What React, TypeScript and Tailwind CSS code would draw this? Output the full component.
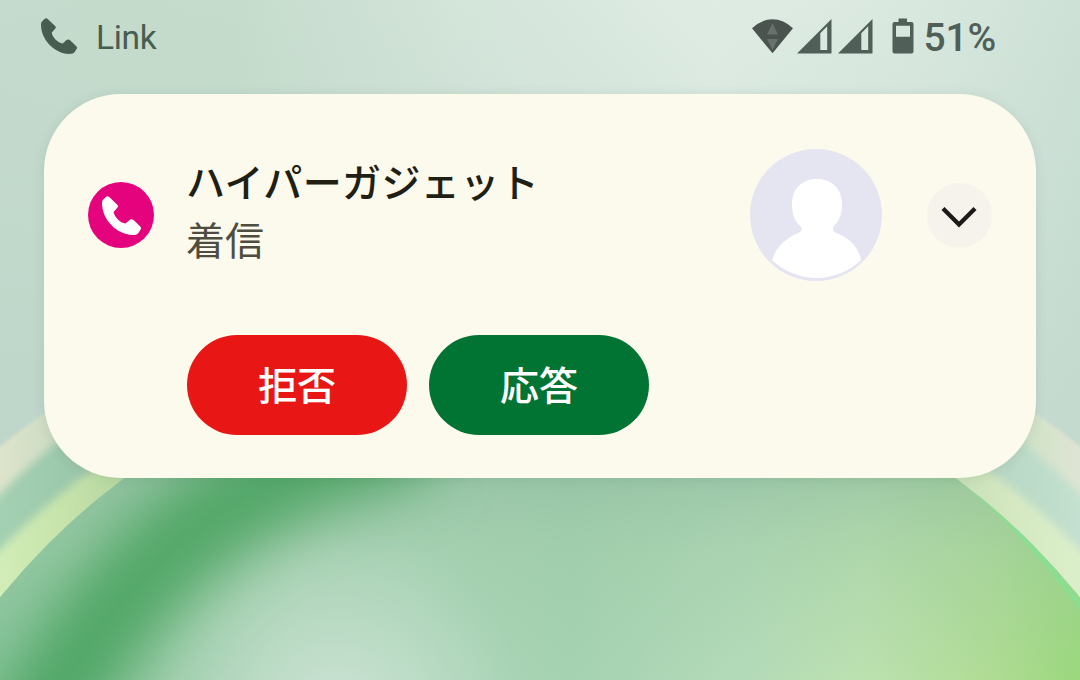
import type { ReactNode } from "react";

const HANDSET =
  "M3.5.9C4.5-.1 5.7-.1 6.7.9L14.1 8.1C15 9 15 9.8 14.3 10.6L10.7 14.7C11.6 19.6 16.8 24.6 21.7 25.4L25.2 22.3C26.3 21.3 28 21.2 29.1 22.2L35.3 28.2C36.2 29.1 36.2 30.1 35.5 31.2L33.6 34.1C32.4 35.8 31 36 28 36C13.5 35.5.2 22 0 7C0 5.2.3 4.1 1.2 3.2Z";

function Handset({ size, className }: { size: number; className?: string }) {
  return (
    <svg width={size} height={size} viewBox="0 0 36 36" fill="currentColor" className={className} aria-hidden="true">
      <path d={HANDSET} />
    </svg>
  );
}

function Wallpaper() {
  return (
    <svg className="absolute inset-0" width="1080" height="680" viewBox="0 0 1080 680" aria-hidden="true">
      <defs>
        <linearGradient id="sky">
          <stop offset="0" stopColor="#c4dbcd" />
          <stop offset=".22" stopColor="#c5dccc" />
          <stop offset=".42" stopColor="#d3e4d9" />
          <stop offset=".66" stopColor="#dfece4" />
          <stop offset=".85" stopColor="#d9e8df" />
          <stop offset="1" stopColor="#cde1d6" />
        </linearGradient>
        <linearGradient id="skyShade" x1="0" y1="0" x2="0" y2="1">
          <stop offset="0" stopColor="#b8d1c6" stopOpacity="0" />
          <stop offset=".6" stopColor="#b8d1c6" stopOpacity=".45" />
        </linearGradient>
        <linearGradient id="outerRim" x1="0" y1="0" x2="1080" y2="0" gradientUnits="userSpaceOnUse">
          <stop offset="0" stopColor="#dde4cb" />
          <stop offset=".05" stopColor="#cddcc4" />
          <stop offset=".95" stopColor="#cfe2c6" />
          <stop offset="1" stopColor="#dfe4d4" />
        </linearGradient>
        <linearGradient id="gap" x1="0" y1="0" x2="1080" y2="0" gradientUnits="userSpaceOnUse">
          <stop offset="0" stopColor="#a4d0b2" />
          <stop offset=".09" stopColor="#98c4a8" />
          <stop offset=".9" stopColor="#b4d4c0" />
          <stop offset="1" stopColor="#c4e1d0" />
        </linearGradient>
        <linearGradient id="innerRim" x1="0" y1="0" x2="1080" y2="0" gradientUnits="userSpaceOnUse">
          <stop offset="0" stopColor="#d2edb8" />
          <stop offset=".06" stopColor="#c6e3aa" />
          <stop offset=".12" stopColor="#b4d5a0" />
          <stop offset=".88" stopColor="#c6deb6" />
          <stop offset=".94" stopColor="#d5e8c2" />
          <stop offset="1" stopColor="#dbefca" />
        </linearGradient>
        <linearGradient id="disc">
          <stop offset="0" stopColor="#8bc69e" />
          <stop offset=".14" stopColor="#9ccdaa" />
          <stop offset=".28" stopColor="#acd4b8" />
          <stop offset=".38" stopColor="#add6ba" />
          <stop offset=".53" stopColor="#a5d2b1" />
          <stop offset=".68" stopColor="#b3dab9" />
          <stop offset=".8" stopColor="#bce1b0" />
          <stop offset=".92" stopColor="#afdc93" />
          <stop offset="1" stopColor="#9bd87c" />
        </linearGradient>
        <linearGradient id="discShade" x1="0" y1="470" x2="0" y2="680" gradientUnits="userSpaceOnUse">
          <stop offset="0" stopColor="#90bda0" stopOpacity=".7" />
          <stop offset=".4" stopColor="#9bc8a5" stopOpacity=".4" />
          <stop offset="1" stopColor="#9bc8a5" stopOpacity="0" />
        </linearGradient>
        <radialGradient id="pool" cx="335" cy="715" r="190" gradientUnits="userSpaceOnUse">
          <stop offset="0" stopColor="#d2e6d9" stopOpacity=".9" />
          <stop offset="1" stopColor="#c5dfce" stopOpacity="0" />
        </radialGradient>
        <clipPath id="discClip">
          <circle cx="540" cy="1035" r="695" />
        </clipPath>
        <filter id="soft" x="-30%" y="-30%" width="160%" height="160%">
          <feGaussianBlur stdDeviation="30" />
        </filter>
        <filter id="edge">
          <feGaussianBlur stdDeviation="1.8" />
        </filter>
        <filter id="glow">
          <feGaussianBlur stdDeviation="4" />
        </filter>
      </defs>

      <rect width="1080" height="680" fill="url(#sky)" />
      <rect width="1080" height="680" fill="url(#skyShade)" />
      <circle cx="540" cy="1121" r="864" fill="url(#outerRim)" filter="url(#edge)" />
      <circle cx="540" cy="1040" r="768" fill="url(#gap)" filter="url(#glow)" />
      <circle cx="540" cy="1080" r="757" fill="url(#innerRim)" filter="url(#glow)" />

      <g clipPath="url(#discClip)">
        <rect y="340" width="1080" height="340" fill="url(#disc)" />
        <rect y="340" width="1080" height="340" fill="url(#discShade)" />
        <rect x="120" y="480" width="440" height="200" fill="url(#pool)" />
        <path
          d="M10 780C70 660 130 570 220 510C275 473 335 448 425 430"
          fill="none"
          stroke="#4ba361"
          strokeOpacity=".95"
          strokeWidth="94"
          filter="url(#soft)"
        />
        <path d="M965 480Q1028 535 1090 618" fill="none" stroke="#86e092" strokeWidth="5" filter="url(#edge)" />
      </g>
    </svg>
  );
}

function SignalIcon() {
  return (
    <svg width="35" height="35" viewBox="0 0 35 35" fill="currentColor" aria-hidden="true">
      <path fillRule="evenodd" d="M0 34.5L34.5 0V34.5ZM23.3 14.2V31H30.2V7.2Z" />
    </svg>
  );
}

function StatusBar() {
  return (
    <header className="flex h-[76px] items-center justify-between pr-[84px] pl-[41px] font-['Roboto',sans-serif]">
      <div className="flex items-center gap-[19px] text-[#475d50]">
        <Handset size={36} className="-mt-1" />
        <span className="text-[33.5px] leading-10 tracking-[-0.3px]">Link</span>
      </div>
      <div className="flex items-center text-[#505f57]">
        <svg width="41" height="35" viewBox="0 0 41 35" className="-mt-1" aria-hidden="true">
          <path d="M0 9.3Q9.5 .3 20.5.3T41 9.3L20.5 34.3Z" fill="#4b534f" />
          <path d="M20.5 4L26 15.5H15ZM15 20H26L20.5 31Z" fill="#68716c" />
        </svg>
        <div className="-mt-1 ml-1 flex gap-1.5">
          <SignalIcon />
          <SignalIcon />
        </div>
        <svg width="22" height="36" viewBox="0 0 22 36" fill="currentColor" className="-mt-1 ml-[19px]" aria-hidden="true">
          <path
            fillRule="evenodd"
            d="M6.5.5H15V4H19.5Q21.5 4 21.5 6V33.5Q21.5 35.5 19.5 35.5H2.5Q.5 35.5.5 33.5V6Q.5 4 2.5 4H6.5ZM4 7.7V18.7H18V7.7Z"
          />
        </svg>
        <span className="ml-2.5 text-[39px] leading-10 font-medium tracking-[-0.2px]">51%</span>
      </div>
    </header>
  );
}

function Avatar() {
  return (
    <svg width="132" height="132" viewBox="0 0 132 132" className="shrink-0" aria-hidden="true">
      <circle cx="66" cy="66" r="66" fill="#e4e5f0" />
      <path
        fill="#fff"
        d="M67 30C82 30 92 40 92 55C92 66 89 72 84 77C82 80 83 82 86 84C98 88 109 98 111 111A64 64 0 0 1 22 111C26 98 36 89 48 84C52 82 53 80 50 77C45 72 42 66 42 55C42 40 52 30 67 30Z"
      />
    </svg>
  );
}

function ActionButton({ className, children }: { className: string; children: ReactNode }) {
  return (
    <button
      type="button"
      className={`flex h-[100px] w-[220px] items-center justify-center rounded-full pb-1 text-[39px] leading-none font-medium text-white ${className}`}
    >
      {children}
    </button>
  );
}

export default function App() {
  return (
    <div className="relative h-[680px] w-[1080px] overflow-hidden">
      <Wallpaper />
      <div className="relative">
        <StatusBar />
        <main className="mx-[44px] mt-[18px] h-[384px] rounded-[77px] bg-[#fbfaed] px-11 pt-[54px] font-['Noto_Sans_CJK_JP',sans-serif] shadow-[0_1px_12px_rgba(60,90,70,0.12)]">
          <div className="flex h-[134px] items-center">
            <span className="flex size-[66px] shrink-0 items-center justify-center rounded-full bg-[#e4037c] text-white">
              <Handset size={39} />
            </span>
            <div className="-mt-3 ml-8 flex-1">
              <h1 className="text-[39px] leading-[58px] font-medium tracking-[0.4px] text-[#211f14]">
                ハイパーガジェット
              </h1>
              <p className="text-[39px] leading-[58px] text-[#4f4d40]">着信</p>
            </div>
            <Avatar />
            <button
              type="button"
              aria-label="展開"
              className="ml-[45px] flex size-[65px] shrink-0 items-center justify-center rounded-full bg-[#f5f3eb]"
            >
              <svg width="38" height="24" viewBox="0 0 38 24" fill="none" className="mt-1 mr-0.5" aria-hidden="true">
                <path d="M3 3.5L19 19.5L35 3.5" stroke="#1d1b18" strokeWidth="4.3" />
              </svg>
            </button>
          </div>
          <div className="mt-[53px] ml-[99px] flex gap-[22px]">
            <ActionButton className="bg-[#e81716]">拒否</ActionButton>
            <ActionButton className="bg-[#017333]">応答</ActionButton>
          </div>
        </main>
      </div>
    </div>
  );
}
